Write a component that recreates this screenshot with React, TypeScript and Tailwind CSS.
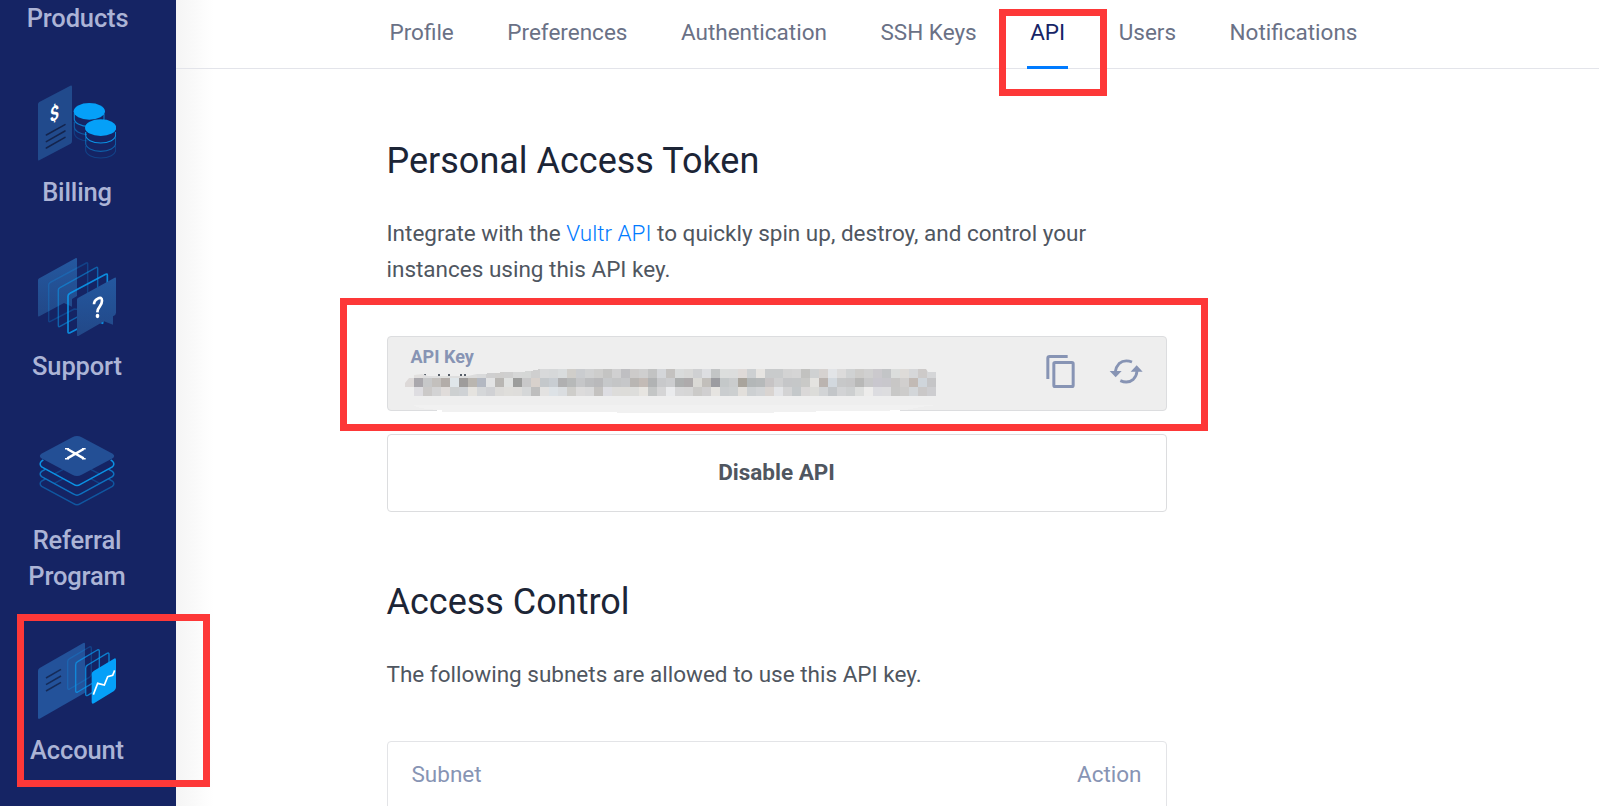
import type { ReactNode } from "react";

const ROW_TOP =
  "e2e0df dededf dfdfdf dfdfdd dedede dddddd dcdcdc d9dadb cfcfd0 cfcecd cfcfcf d6d7d7 d5d7d6 cfcfcf d8d9da d6d8d9 d9dcdd d0ceca cacccf d0d1d2 cdcdcc c4c4c3 d0d0d1 bfbfc2 cdcbca cfcfcf c2c3c3 d4d6d9 c4c2c0 d9dbdb d8d8d7 cfd0d2 dddee1 c3c5c6 dcdedd dcdddd dfdad8 cdd0d2 e6e4e1 c9cbcc c9cbcc d3d3d3 d5d5d5 c2c2c0 cfd1d2 d6d2d0 e2e4e7 dcdbdb d0d2d3 cdccca d0d0d0 cbc9cd c3c5c7 dbdddc dedbd8 d6d7d9 cdcac9 d5d6d8";
const ROW_MID =
  "aaa8ad c7c8c9 c3c0bd b3ada9 dfe6ea 9e9c9b bab6b0 b3b8c2 e2e3e4 b8b6b3 dfe1e0 9c9d9c c8c8c9 d8d1cc c4c8cb c8cdd2 b0b0b1 b7b9b9 c5c6c8 bcbdbf b9b9bb c6c8ca c4c5c6 c6c7c9 b9b6b3 c3bbb6 b1b3b4 c8c9cb cccdcf adafaf aeabac dad9d5 c2bfbb 9c9ca1 c4c8c9 cacccd a9a49c b3b7b8 b6b9ba c7c4c5 cfcfd0 c5c6c8 c5c7c8 c9c9c7 e4e3e0 bbb4b0 d2d8de c7c8c9 c6c6c7 b8b8b7 c8c8c9 c9c7ce c8c7cc c8c7c6 d1cfce c2bab5 cfd5db c5c5c7";
const ROW_LOW =
  "dedde1 cbc9c8 d3d3d4 e0dcda cdd0d1 cfd2d5 e5e3df d5d7d9 d0d1d4 dcdbd9 dfdedb dedddb d5d7d8 bebebe e3e2e1 dde2e6 dadde0 cecdca dcdbdb d9d9da c4c2c0 dddde2 dddcda dddcd9 dddddb e7e5e1 c4c6c6 d5d5d6 eaebed d7d7d8 d6d6d6 cbcac8 d0cfd0 e6e4e1 cacdcf cccfd0 e2dfdb cdd0d2 d2d4d6 d9d4d1 e3e4e7 d3d3d4 c4c8ca dad8d8 dcdcd9 d2d4d6 c3c6c9 d2d3d5 cdcfd0 dddedd edeceb dcdce0 dddddf c8c8c7 cdcccb d3d6d9 cac8c8 cdcdd0";
const MOSAIC = [ROW_TOP, ROW_MID, ROW_LOW].map((row) => row.split(" "));

function BillingIcon() {
  return (
    <svg viewBox="114 252 234 234" className="size-[78px]" fill="none">
      <path d="M118 306 L211 257 Q216 255 216 260 V424 Q216 429 212 431 L118 481 Q114 483 114 478 V313 Q114 308 118 306Z" fill="#214a8c" />
      <g stroke="#14244d" strokeWidth="4.6" strokeLinecap="round">
        <path d="M139 405 L195 374" />
        <path d="M139 425 L195 393" />
        <path d="M139 444 L195 412" />
      </g>
      <text transform="matrix(.82 -.42 0 1 149 368)" fontSize="60" fontWeight="700" fill="#fff" className="font-['Roboto',sans-serif]">$</text>
      <g strokeWidth="3.4" stroke="#0a9df2">
        <path d="M223 354 a45 24 0 0 0 45 26 a45 24 0 0 0 44 -24 v-14 M223 340 v16" opacity=".75" />
        <path d="M223 366 v15 a45 23 0 0 0 38 23" opacity=".45" />
        <path d="M223 388 v12 a45 24 0 0 0 40 23" opacity=".22" />
      </g>
      <ellipse cx="268" cy="334" rx="47" ry="25" fill="#05a0f8" />
      <g strokeWidth="3.4" stroke="#0a9df2">
        <path d="M257 396 v9 a45 24 0 0 0 90 0 v-9" opacity=".9" />
        <path d="M257 412 v18 a45 24 0 0 0 90 0 v-18" opacity=".5" />
        <path d="M257 438 v12 a45 24 0 0 0 90 0 v-12" opacity=".25" />
      </g>
      <ellipse cx="302" cy="383" rx="47" ry="25" fill="#05a0f8" />
    </svg>
  );
}

function SupportIcon() {
  return (
    <svg viewBox="114 84 234 234" className="size-[78px]" fill="none">
      <defs>
        <linearGradient id="bubble" x1="0" y1="0" x2="0" y2="1">
          <stop stopColor="#24589f" />
          <stop offset="1" stopColor="#224888" />
        </linearGradient>
      </defs>
      <path d="M118 145 L228 84 Q231 83 231 88 V198 L216 207 V230 L192 219 L118 259 Q114 261 114 256 V151 Q114 147 118 145Z" fill="url(#bubble)" />
      <g stroke="#0a9df2" strokeWidth="4.4" strokeLinejoin="round">
        <path d="M151 157 L259 99 Q263 97 263 101 V208 L249 217 V240 L223 237 L151 274 Q146 277 146 271 V165 Q146 160 151 157Z" opacity=".25" />
        <path d="M180 173 L288 113 Q293 110 293 116 V223 L279 232 V256 L252 250 L180 289 Q175 292 175 286 V180 Q175 175 180 173Z" opacity=".5" />
        <path d="M210 190 L317 133 Q322 130 322 136 V243 L308 252 V280 L284 270 L210 308 Q204 311 204 305 V199 Q204 193 210 190Z" opacity=".85" strokeWidth="5" />
      </g>
      <path d="M235 203 L344 143 Q348 141 348 146 V248 Q348 255 339 259 V284 L312 274 L235 318 Q231 320 231 315 V209 Q231 205 235 203Z" fill="url(#bubble)" />
      <path d="M282 223 Q282 211 293 206 Q306 199 306 212 Q306 221 299 230 Q293 237 292 247" stroke="#fff" strokeWidth="8" />
      <ellipse cx="292.5" cy="258" rx="5.500" ry="6.500" fill="#fff" />
    </svg>
  );
}

function ReferralIcon() {
  return (
    <svg viewBox="114 66 234 234" className="size-[78px]" fill="none">
      <g stroke="#0a9df2" strokeWidth="4.4">
        <path d="M136 207 L125 213 Q116 221 125 229 L221 281 Q231 288 241 281 L337 229 Q346 221 337 213 L326 207" opacity=".42" />
        <path d="M136 178 L125 184 Q116 192 125 200 L221 252 Q231 259 241 252 L337 200 Q346 192 337 184 L326 178" opacity=".65" />
        <path d="M163 192 L190 178 M163 220 L190 206 M299 192 L272 178 M299 220 L272 206" opacity=".25" />
        <path d="M130 150 L125 153 Q116 162 125 171 L221 223 Q231 230 241 223 L337 171 Q346 162 337 153 L332 150" opacity=".9" />
      </g>
      <path d="M217 82 Q231 74 245 82 L338 131 Q347 138 338 145 L245 194 Q231 202 217 194 L124 145 Q115 138 124 131Z" fill="#234f95" />
      <path d="M202 117 L251 145 M251 117 L202 145" stroke="#fff" strokeWidth="7.5" />
      <path d="M195 116 H207 M246 116 H257 M195 146 H207 M246 146 H257" stroke="#fff" strokeWidth="4.500" />
    </svg>
  );
}

function AccountIcon() {
  return (
    <svg viewBox="114 126 234 234" className="size-[78px]" fill="none">
      <path d="M119 204 L250 129 Q255 127 255 132 V278 L119 356 Q114 358 114 353 V212 Q114 207 119 204Z" fill="#23529a" />
      <g stroke="#152b59" strokeWidth="4.6">
        <path d="M138 234 L183 208" />
        <path d="M138 254 L183 228" />
        <path d="M138 273 L183 247" />
      </g>
      <g stroke="#0a9df2" strokeWidth="4.2">
        <path d="M209 176 L268 141 Q274 138 274 145 V222 Q274 229 268 232 L209 267 Q203 270 203 263 V186 Q203 179 209 176Z" opacity=".25" />
        <path d="M233 185 L292 150 Q298 147 298 154 V231 Q298 238 292 241 L233 276 Q227 279 227 272 V195 Q227 188 233 185Z" opacity=".7" />
        <path d="M263 195 L321 160 Q327 157 327 164 V241 Q327 248 321 251 L263 286 Q257 289 257 282 V205 Q257 198 263 195Z" opacity=".75" />
      </g>
      <path d="M282 212 L342 176 Q348 173 348 180 V262 Q348 269 342 273 L282 310 Q275 313 275 306 V222 Q275 216 282 212Z" fill="#05a0f8" />
      <path d="M280 284 L293 250 L313 255 L323 230 L338 226 L344 211" stroke="#fff" strokeWidth="5" />
    </svg>
  );
}

function NavItem({ icon, children }: { icon: ReactNode; children: ReactNode }) {
  return (
    <a className="mt-12 flex flex-col items-center gap-3 text-center">
      {icon}
      <span className="leading-9">{children}</span>
    </a>
  );
}

function CopyIcon() {
  return (
    <svg viewBox="283 192 93 105" className="h-[35px] w-[31px]" fill="none" stroke="#8794b4" strokeWidth="9">
      <path d="M351 199.500 H297 Q291.500 199.500 291.500 205 V267" />
      <rect x="309.500" y="217.500" width="58" height="72" rx="4" />
    </svg>
  );
}

function RotateIcon() {
  return (
    <svg viewBox="477 198 102 93" className="h-[31px] w-[34px]" fill="none">
      <path d="M546 216 Q523 207 507 221 Q498 230 496 245 M511 272 Q534 282 550 268 Q560 258 561 243" stroke="#8794b4" strokeWidth="8.500" />
      <path d="M479 243 H515 L497 262Z M542 245 H578 L560 226Z" fill="#8794b4" />
    </svg>
  );
}

function MaskedKey() {
  return (
    <svg viewBox="400 366 550 50" className="absolute top-[29px] left-[12.5px] h-[50px] w-[550px]" shapeRendering="crispEdges">
      <defs>
        <clipPath id="brush">
          <path d="M405 387 V383 L409 378 H414 V375 L422 374 L428 376 H468 L477 374 H487 V373 H500 V372 H525 V371 H533 V370 H538 V369 H926 L928 372 H936 V396 H414 V387Z" />
        </clipPath>
      </defs>
      <path d="M413 405 H937 L920 407 L905 410 H437 L420 408Z" fill="#f1f1f1" />
      <path d="M437 410 H900 V415 H442 V411 H437Z" fill="#fff" />
      <path d="M442 408 H890 V411 H816 V412 H774 V413 H617 V412 H442Z" fill="#f1f1f1" />
      <path d="M424 374h2v2h-2z M438 374h2v2h-2z M448 374h2v2h-2z M460 374h2v2h-2z M464 374h2v2h-2z" fill="#59606a" />
      <g clipPath="url(#brush)">
        <rect x="405" y="378" width="9" height="9" fill="#ddd9d8" />
        {MOSAIC.map((row, y) =>
          row.map((color, x) => (
            <rect key={`${x}-${y}`} x={414 + x * 9} y={369 + y * 9} width="9" height="9" fill={`#${color}`} />
          )),
        )}
      </g>
    </svg>
  );
}

const TABS = ["Profile", "Preferences", "Authentication", "SSH Keys", "API", "Users", "Notifications"];

export default function App() {
  return (
    <div className="relative flex h-[806px] w-[1599px] overflow-hidden bg-white font-['Roboto',sans-serif] text-[22.5px] text-[#4f5660]">
      <aside className="w-44 shrink-0 bg-[#152464] pr-[21px] text-[25.5px] font-medium tracking-[-0.15px] text-[#acb4d6]">
        <div className="text-center leading-9">Products</div>
        <div className="-ml-px">
          <NavItem icon={<BillingIcon />}>Billing</NavItem>
          <NavItem icon={<SupportIcon />}>Support</NavItem>
          <NavItem icon={<ReferralIcon />}>Referral<br />Program</NavItem>
          <NavItem icon={<AccountIcon />}>Account</NavItem>
        </div>
      </aside>

      <main className="min-w-0 flex-1 bg-[linear-gradient(to_right,#f5f5f5,#ffffff_38px)]">
        <nav className="flex h-[69px] gap-[47.5px] border-b border-[#e3e4ea] pl-[210.5px] text-[#6a7186]">
          {TABS.map((tab) => (
            <a
              key={tab}
              className={
                tab === "API"
                  ? "h-[69px] border-b-3 border-[#007bff] px-[3px] pt-[14px] leading-9 text-[#162466]"
                  : "h-[69px] px-[3px] pt-[14px] leading-9"
              }
            >
              {tab}
            </a>
          ))}
        </nav>

        <div className="ml-[210.5px] w-[780px]">
          <h1 className="pt-[68px] text-[36px] leading-[48px] text-[#1c2536]">Personal Access Token</h1>
          <p className="mt-[30px] leading-9">
            Integrate with the <a className="font-light text-[#007bff]">Vultr API</a> to quickly spin up, destroy, and control your
            <br />
            instances using this API key.
          </p>
          <div className="relative mt-[49px] flex h-[75px] items-start justify-between rounded border border-[#dcdddf] bg-[#eeeeee] pr-[22px] pl-[23px]">
            <span className="pt-[8px] text-[18px] leading-6 font-bold text-[#8794b4]">API Key</span>
            <MaskedKey />
            <div className="flex h-full items-center gap-[33px] pr-px pb-[5px]">
              <CopyIcon />
              <RotateIcon />
            </div>
          </div>
          <button className="mt-[23px] flex h-[78px] w-full items-center justify-center rounded border border-[#dcdddf] bg-white font-bold">
            Disable API
          </button>
          <h2 className="mt-[66px] text-[36px] leading-[48px] text-[#1c2536]">Access Control</h2>
          <p className="mt-[30px] leading-9">The following subnets are allowed to use this API key.</p>
          <div className="mt-[49px] flex h-[120px] justify-between rounded border border-[#e3e4e7] px-6 pt-[14px] leading-9 text-[#8794b4]">
            <span>Subnet</span>
            <span>Action</span>
          </div>
        </div>
      </main>

      <div className="absolute top-[614px] left-[17px] h-[173px] w-[193px] border-[7px] border-[#fd3838]" />
      <div className="absolute top-[9px] left-[999px] h-[87px] w-[108px] border-[7px] border-[#fd3838]" />
      <div className="absolute top-[298px] left-[340px] h-[133px] w-[868px] border-[7px] border-[#fd3838]" />
    </div>
  );
}
